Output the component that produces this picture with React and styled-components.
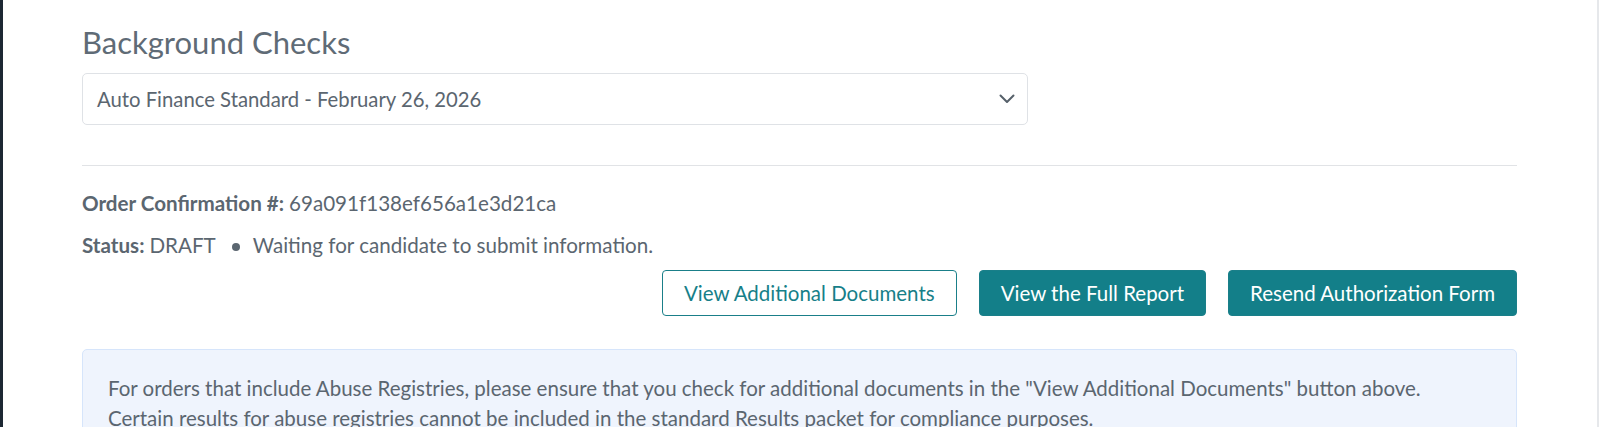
import React from "react";
import styled, { createGlobalStyle } from "styled-components";

const GlobalStyle = createGlobalStyle`
  html, body {
    margin: 0;
    padding: 0;
    background: #ffffff;
  }
  body {
    font-family: Lato, "Open Sans", sans-serif;
    color: #5b6670;
  }
`;

const Page = styled.div`
  box-sizing: border-box;
  min-height: 100vh;
  border-left: 3px solid #1c2833;
  border-right: 2px solid #e6e8eb;
  padding: 23px 80px 0 79px;
`;

const Title = styled.h2`
  margin: 0 0 12px;
  font-size: 31px;
  line-height: 38px;
  font-weight: 400;
  color: #5f6b76;
`;

const SelectBox = styled.div`
  box-sizing: border-box;
  width: 946px;
  height: 52px;
  display: flex;
  align-items: center;
  justify-content: space-between;
  padding: 0 12px 0 14px;
  border: 1px solid #dfe2e6;
  border-radius: 5px;
  font-size: 20.3px;
  color: #5b6670;
`;

const Divider = styled.hr`
  margin: 40px 0 0;
  border: 0;
  border-top: 1px solid #e1e3e6;
`;

const Details = styled.div`
  padding-top: 25px;
  display: flex;
  flex-direction: column;
  gap: 18px;
`;

const Line = styled.div`
  display: flex;
  align-items: center;
  font-size: 20.6px;
  line-height: 24px;
  color: #5b6670;
`;

const Label = styled.strong`
  font-weight: 700;
  margin-right: 5px;
`;

const Dot = styled.span`
  width: 8px;
  height: 8px;
  border-radius: 50%;
  background: #5b6670;
  margin: 4px 13px 0 16px;
`;

const Actions = styled.div`
  display: flex;
  justify-content: flex-end;
  gap: 22px;
  margin-top: 13px;
`;

const Button = styled.button`
  box-sizing: border-box;
  height: 46px;
  padding: 0 21px;
  font-family: Lato, "Open Sans", sans-serif;
  font-size: 20.5px;
  border-radius: 4px;
  border: 1px solid #1a7f89;
  cursor: pointer;
  background: ${(p) => (p.$outline ? "#ffffff" : "#137f89")};
  color: ${(p) => (p.$outline ? "#177f89" : "#ffffff")};
`;

const Notice = styled.div`
  box-sizing: border-box;
  margin-top: 33px;
  padding: 24px 25px 30px;
  background: #eff4fd;
  border: 1px solid #d6e5fb;
  border-radius: 5px;
  font-size: 20.5px;
  line-height: 29.5px;
  color: #5b6670;
`;

const Chevron = () => (
  <svg width="16" height="10" viewBox="0 0 16 10" fill="none">
    <path d="M1.5 1.5 L8 8 L14.5 1.5" stroke="#56606a" strokeWidth="2" strokeLinecap="round" strokeLinejoin="round" />
  </svg>
);

export default function App() {
  return (
    <>
      <GlobalStyle />
      <Page>
        <Title>Background Checks</Title>
        <SelectBox>
          <span>Auto Finance Standard - February 26, 2026</span>
          <Chevron />
        </SelectBox>
        <Divider />
        <Details>
          <Line>
            <Label>Order Confirmation #:</Label>69a091f138ef656a1e3d21ca
          </Line>
          <Line>
            <Label>Status:</Label>DRAFT
            <Dot />
            Waiting for candidate to submit information.
          </Line>
        </Details>
        <Actions>
          <Button $outline>View Additional Documents</Button>
          <Button>View the Full Report</Button>
          <Button>Resend Authorization Form</Button>
        </Actions>
        <Notice>
          For orders that include Abuse Registries, please ensure that you check for additional documents in the "View Additional Documents" button above.
          <br />
          Certain results for abuse registries cannot be included in the standard Results packet for compliance purposes.
        </Notice>
      </Page>
    </>
  );
}
